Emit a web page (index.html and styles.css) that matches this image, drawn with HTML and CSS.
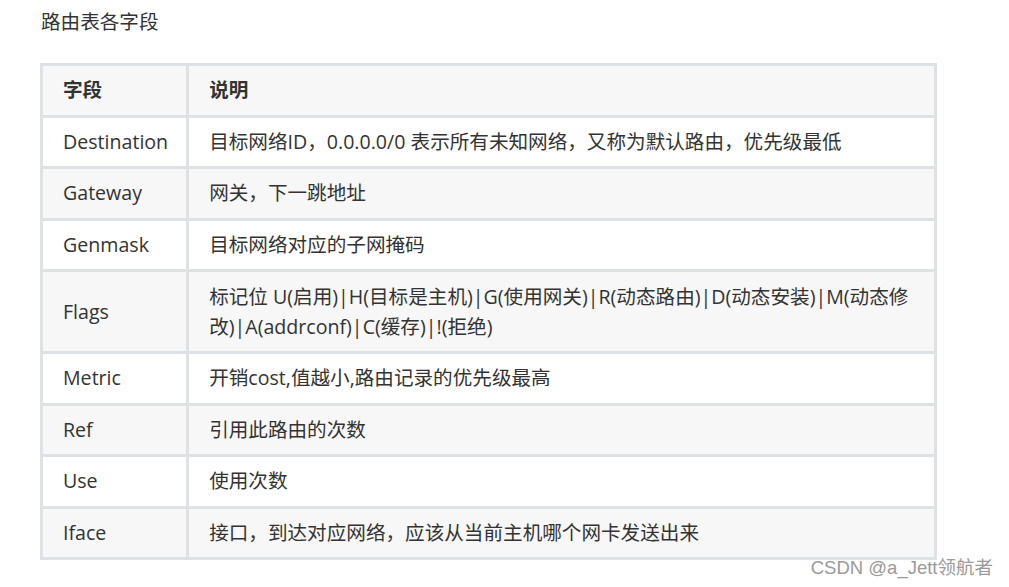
FILE: index.html
```html
<!DOCTYPE html>
<html lang="zh-CN">
<head>
<meta charset="utf-8">
<title>路由表各字段</title>
<link rel="stylesheet" href="styles.css">
</head>
<body>
<div class="page">
  <p class="title">路由表各字段</p>
  <table class="fields">
    <thead>
      <tr><th class="c1">字段</th><th>说明</th></tr>
    </thead>
    <tbody>
      <tr><td>Destination</td><td>目标网络ID，0.0.0.0/0 表示所有未知网络，又称为默认路由，优先级最低</td></tr>
      <tr><td>Gateway</td><td>网关，下一跳地址</td></tr>
      <tr><td>Genmask</td><td>目标网络对应的子网掩码</td></tr>
      <tr><td>Flags</td><td>标记位 U(启用)|H(目标是主机)|G(使用网关)|R(动态路由)|D(动态安装)|M(动态修改)|A(addrconf)|C(缓存)|!(拒绝)</td></tr>
      <tr><td>Metric</td><td>开销cost,值越小,路由记录的优先级最高</td></tr>
      <tr><td>Ref</td><td>引用此路由的次数</td></tr>
      <tr><td>Use</td><td>使用次数</td></tr>
      <tr><td>Iface</td><td>接口，到达对应网络，应该从当前主机哪个网卡发送出来</td></tr>
    </tbody>
  </table>
  <div class="watermark">CSDN @a_Jett领航者</div>
</div>
</body>
</html>
```

FILE: styles.css
```css
html, body {
  margin: 0;
  padding: 0;
  background: #ffffff;
}
.page {
  position: relative;
  width: 1009px;
  height: 587px;
  padding: 0 0 0 41px;
  box-sizing: border-box;
  font-family: "Open Sans", "Noto Sans CJK SC", sans-serif;
  color: #333333;
}
.title {
  margin: 0;
  padding-top: 8px;
  font-size: 19.6px;
  line-height: 28px;
  color: #333333;
}
.fields {
  margin-top: 27px;
  margin-left: -1px;
  border-collapse: collapse;
  width: 897px;
  font-size: 19.6px;
  line-height: 30px;
}
.fields th,
.fields td {
  border: 3px solid #dfe2e5;
  padding: 9.3px 20px 9.3px 20px;
  text-align: left;
  vertical-align: middle;
}
.fields th:first-child,
.fields td:first-child {
  padding-right: 18px;
}
.fields th {
  font-weight: 700;
  background: #f7f7f7;
}
.fields .c1 {
  width: 102px;
}
.fields tbody tr:nth-child(even) td {
  background: #f7f7f7;
}
.watermark {
  position: absolute;
  right: 16px;
  top: 555px;
  font-family: "Liberation Sans", "Noto Sans CJK SC", sans-serif;
  font-size: 18.5px;
  line-height: 26px;
  color: #9a9a9a;
  text-shadow: 0 0 1px #ffffff;
}
```
